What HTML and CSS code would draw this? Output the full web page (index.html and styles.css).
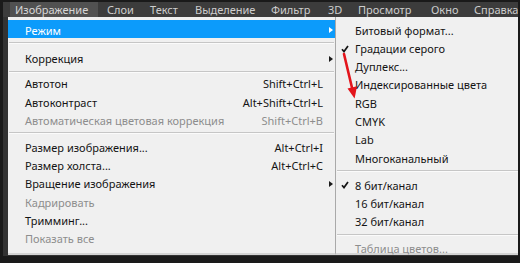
FILE: index.html
```html
<!DOCTYPE html>
<html>
<head>
<meta charset="utf-8">
<link rel="stylesheet" href="styles.css">
</head>
<body>
<div class="screen">
  <div class="menubar">
    <span class="mb-item active">Изображение</span>
    <span class="mb-item">Слои</span>
    <span class="mb-item">Текст</span>
    <span class="mb-item">Выделение</span>
    <span class="mb-item">Фильтр</span>
    <span class="mb-item">3D</span>
    <span class="mb-item">Просмотр</span>
    <span class="mb-item">Окно</span>
    <span class="mb-item">Справка</span>
  </div>
  <div class="menus">
    <div class="menu main">
      <div class="row hl"><span class="label">Режим</span><span class="key"></span><span class="arrow"></span></div>
      <div class="sep sep-wide"></div>
      <div class="row"><span class="label">Коррекция</span><span class="key"></span><span class="arrow"></span></div>
      <div class="sep sep-narrow"></div>
      <div class="row"><span class="label">Автотон</span><span class="key">Shift+Ctrl+L</span><span class="noarrow"></span></div>
      <div class="row"><span class="label">Автоконтраст</span><span class="key">Alt+Shift+Ctrl+L</span><span class="noarrow"></span></div>
      <div class="row dis"><span class="label">Автоматическая цветовая коррекция</span><span class="key">Shift+Ctrl+B</span><span class="noarrow"></span></div>
      <div class="sep"></div>
      <div class="row"><span class="label">Размер изображения...</span><span class="key">Alt+Ctrl+I</span><span class="noarrow"></span></div>
      <div class="row"><span class="label">Размер холста...</span><span class="key">Alt+Ctrl+C</span><span class="noarrow"></span></div>
      <div class="row"><span class="label">Вращение изображения</span><span class="key"></span><span class="arrow"></span></div>
      <div class="row dis"><span class="label">Кадрировать</span><span class="key"></span><span class="noarrow"></span></div>
      <div class="row"><span class="label">Тримминг...</span><span class="key"></span><span class="noarrow"></span></div>
      <div class="row dis"><span class="label">Показать все</span><span class="key"></span><span class="noarrow"></span></div>
    </div>
    <div class="menu sub">
      <div class="srow"><span class="chk"></span><span class="label">Битовый формат...</span></div>
      <div class="srow"><span class="chk"><svg width="8" height="8" viewBox="0 0 8 8"><path d="M1 4.2 L3 6.6 L7 1" fill="none" stroke="#151515" stroke-width="1.7"/></svg></span><span class="label">Градации серого</span></div>
      <div class="srow"><span class="chk"></span><span class="label">Дуплекс...</span></div>
      <div class="srow"><span class="chk"></span><span class="label">Индексированные цвета</span></div>
      <div class="srow"><span class="chk"></span><span class="label">RGB</span></div>
      <div class="srow"><span class="chk"></span><span class="label">CMYK</span></div>
      <div class="srow"><span class="chk"></span><span class="label">Lab</span></div>
      <div class="srow"><span class="chk"></span><span class="label">Многоканальный</span></div>
      <div class="sep"></div>
      <div class="srow"><span class="chk"><svg width="8" height="8" viewBox="0 0 8 8"><path d="M1 4.2 L3 6.6 L7 1" fill="none" stroke="#151515" stroke-width="1.7"/></svg></span><span class="label">8 бит/канал</span></div>
      <div class="srow"><span class="chk"></span><span class="label">16 бит/канал</span></div>
      <div class="srow"><span class="chk"></span><span class="label">32 бит/канал</span></div>
      <div class="sep"></div>
      <div class="srow dis"><span class="chk"></span><span class="label">Таблица цветов...</span></div>
    </div>
  </div>
  <svg class="redarrow" width="520" height="263" viewBox="0 0 520 263">
    <line x1="344" y1="54" x2="352.3" y2="89" stroke="#e3141b" stroke-width="2.6" stroke-linecap="round"/>
    <polygon points="347.5,88.5 357,86.3 354.6,98.5" fill="#e3141b"/>
  </svg>
</div>
</body>
</html>
```
FILE: styles.css
```css
html, body {
  margin: 0;
  padding: 0;
  background: #161616;
}
.screen {
  position: relative;
  width: 520px;
  height: 263px;
  overflow: hidden;
  background: #1a1a1a;
  padding: 2px 2px 0 3px;
  box-sizing: border-box;
  font-family: "Noto Sans", "Open Sans", sans-serif;
  font-size: 11px;
}
.menubar {
  height: 15px;
  background: #3c3c3c;
  display: flex;
  align-items: stretch;
  padding-left: 7px;
  color: #cdcdcd;
  white-space: nowrap;
  overflow: hidden;
}
.mb-item {
  flex: none;
  padding-left: 5px;
  margin-right: 4px;
  line-height: 15px;
  box-sizing: border-box;
}
.mb-item:nth-child(1) { width: 88px; }
.mb-item:nth-child(2) { width: 39px; }
.mb-item:nth-child(3) { width: 41px; }
.mb-item:nth-child(4) { width: 72px; }
.mb-item:nth-child(5) { width: 53px; }
.mb-item:nth-child(6) { width: 26px; }
.mb-item:nth-child(7) { width: 69px; }
.mb-item:nth-child(8) { width: 39px; }
.mb-item:nth-child(9) { margin-right: 0; }
.mb-item.active {
  background: #515151;
  color: #d6d6d6;
}
.menus {
  display: flex;
  background: #333;
  height: 239px;
  padding-left: 5px;
}
.menu {
  background: #f0f0f0;
  color: #141414;
  box-sizing: border-box;
  white-space: nowrap;
}
.main {
  width: 327px;
  height: 238px;
  padding-top: 3px;
  border-bottom: 2px solid #d4d4d4;
}
.sub {
  width: 183px;
  height: 238px;
  padding-top: 3px;
  border-left: 1px solid #a9a9a9;
  border-bottom: 2px solid #d4d4d4;
}
.row, .srow {
  display: flex;
  height: 18.3px;
  box-sizing: border-box;
  padding-top: 2.6px;
  line-height: 15.7px;
}
.row {
  padding-left: 17px;
}
.row .label {
  flex: 1;
}
.row .key {
  text-align: right;
}
.arrow, .noarrow {
  width: 12px;
  flex: none;
  display: flex;
  align-items: center;
}
.arrow::before {
  content: "";
  margin-left: 6px;
  border-left: 4px solid #1a1a1a;
  border-top: 3.5px solid transparent;
  border-bottom: 3.5px solid transparent;
}
.row.hl {
  background: #0c9bfb;
  color: #ffffff;
}
.row.hl .arrow::before {
  border-left-color: #ffffff;
}
.dis {
  color: #8d8d8d;
}
.sep {
  height: 8.6px;
  display: flex;
  align-items: center;
}
.sep.sep-wide {
  height: 10.6px;
  align-items: flex-start;
  padding-top: 3.6px;
  box-sizing: border-box;
}
.sep.sep-narrow {
  height: 6.6px;
  align-items: flex-end;
  padding-bottom: 2px;
  box-sizing: border-box;
}
.sep::before {
  content: "";
  flex: 1;
  height: 1px;
  background: #c6c6c6;
  box-shadow: 0 1px 0 #fbfbfb;
}
.main .sep::before {
  margin: 0 1px;
}
.sub .sep::before {
  margin: 0 0 0 1px;
}
.chk {
  width: 19px;
  flex: none;
  display: flex;
  align-items: center;
  padding-left: 5px;
  box-sizing: border-box;
}
.redarrow {
  position: absolute;
  left: 0;
  top: 0;
}
```
